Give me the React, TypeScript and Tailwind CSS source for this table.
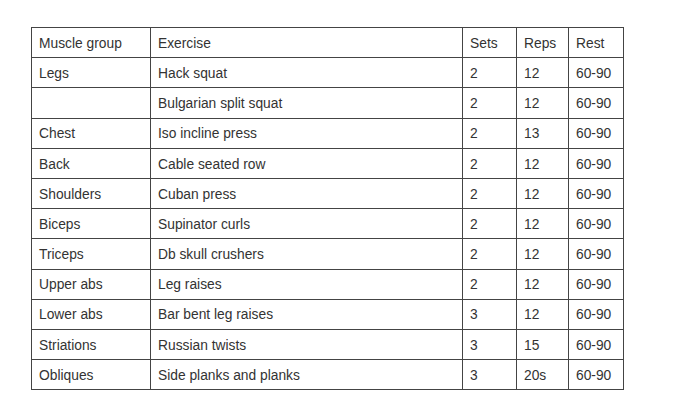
const ROWS: [string, string, string, string, string][] = [
  ["Legs", "Hack squat", "2", "12", "60-90"],
  ["", "Bulgarian split squat", "2", "12", "60-90"],
  ["Chest", "Iso incline press", "2", "13", "60-90"],
  ["Back", "Cable seated row", "2", "12", "60-90"],
  ["Shoulders", "Cuban press", "2", "12", "60-90"],
  ["Biceps", "Supinator curls", "2", "12", "60-90"],
  ["Triceps", "Db skull crushers", "2", "12", "60-90"],
  ["Upper abs", "Leg raises", "2", "12", "60-90"],
  ["Lower abs", "Bar bent leg raises", "3", "12", "60-90"],
  ["Striations", "Russian twists", "3", "15", "60-90"],
  ["Obliques", "Side planks and planks", "3", "20s", "60-90"],
];

const HEADERS = ["Muscle group", "Exercise", "Sets", "Reps", "Rest"];
const WIDTHS = ["w-[119px]", "w-[312px]", "w-[54px]", "w-[52px]", "w-[55px]"];

export default function App() {
  return (
    <div className="w-[680px] h-[417px] bg-white pt-[27px] pl-[31px] font-['Liberation_Sans',Arial,sans-serif] text-[13.8px] text-[#333]">
      <table className="border-collapse table-fixed">
        <colgroup>
          {WIDTHS.map((w, i) => (
            <col key={i} className={w} />
          ))}
        </colgroup>
        <tbody>
          <tr>
            {HEADERS.map((h) => (
              <td key={h} className="h-[30.2px] border border-[#444] pl-[7px] pt-[3px] align-middle font-normal">
                {h}
              </td>
            ))}
          </tr>
          {ROWS.map((row, i) => (
            <tr key={i}>
              {row.map((cell, j) => (
                <td key={j} className="h-[30.2px] border border-[#444] pl-[7px] pt-[3px] align-middle">
                  {cell}
                </td>
              ))}
            </tr>
          ))}
        </tbody>
      </table>
    </div>
  );
}
